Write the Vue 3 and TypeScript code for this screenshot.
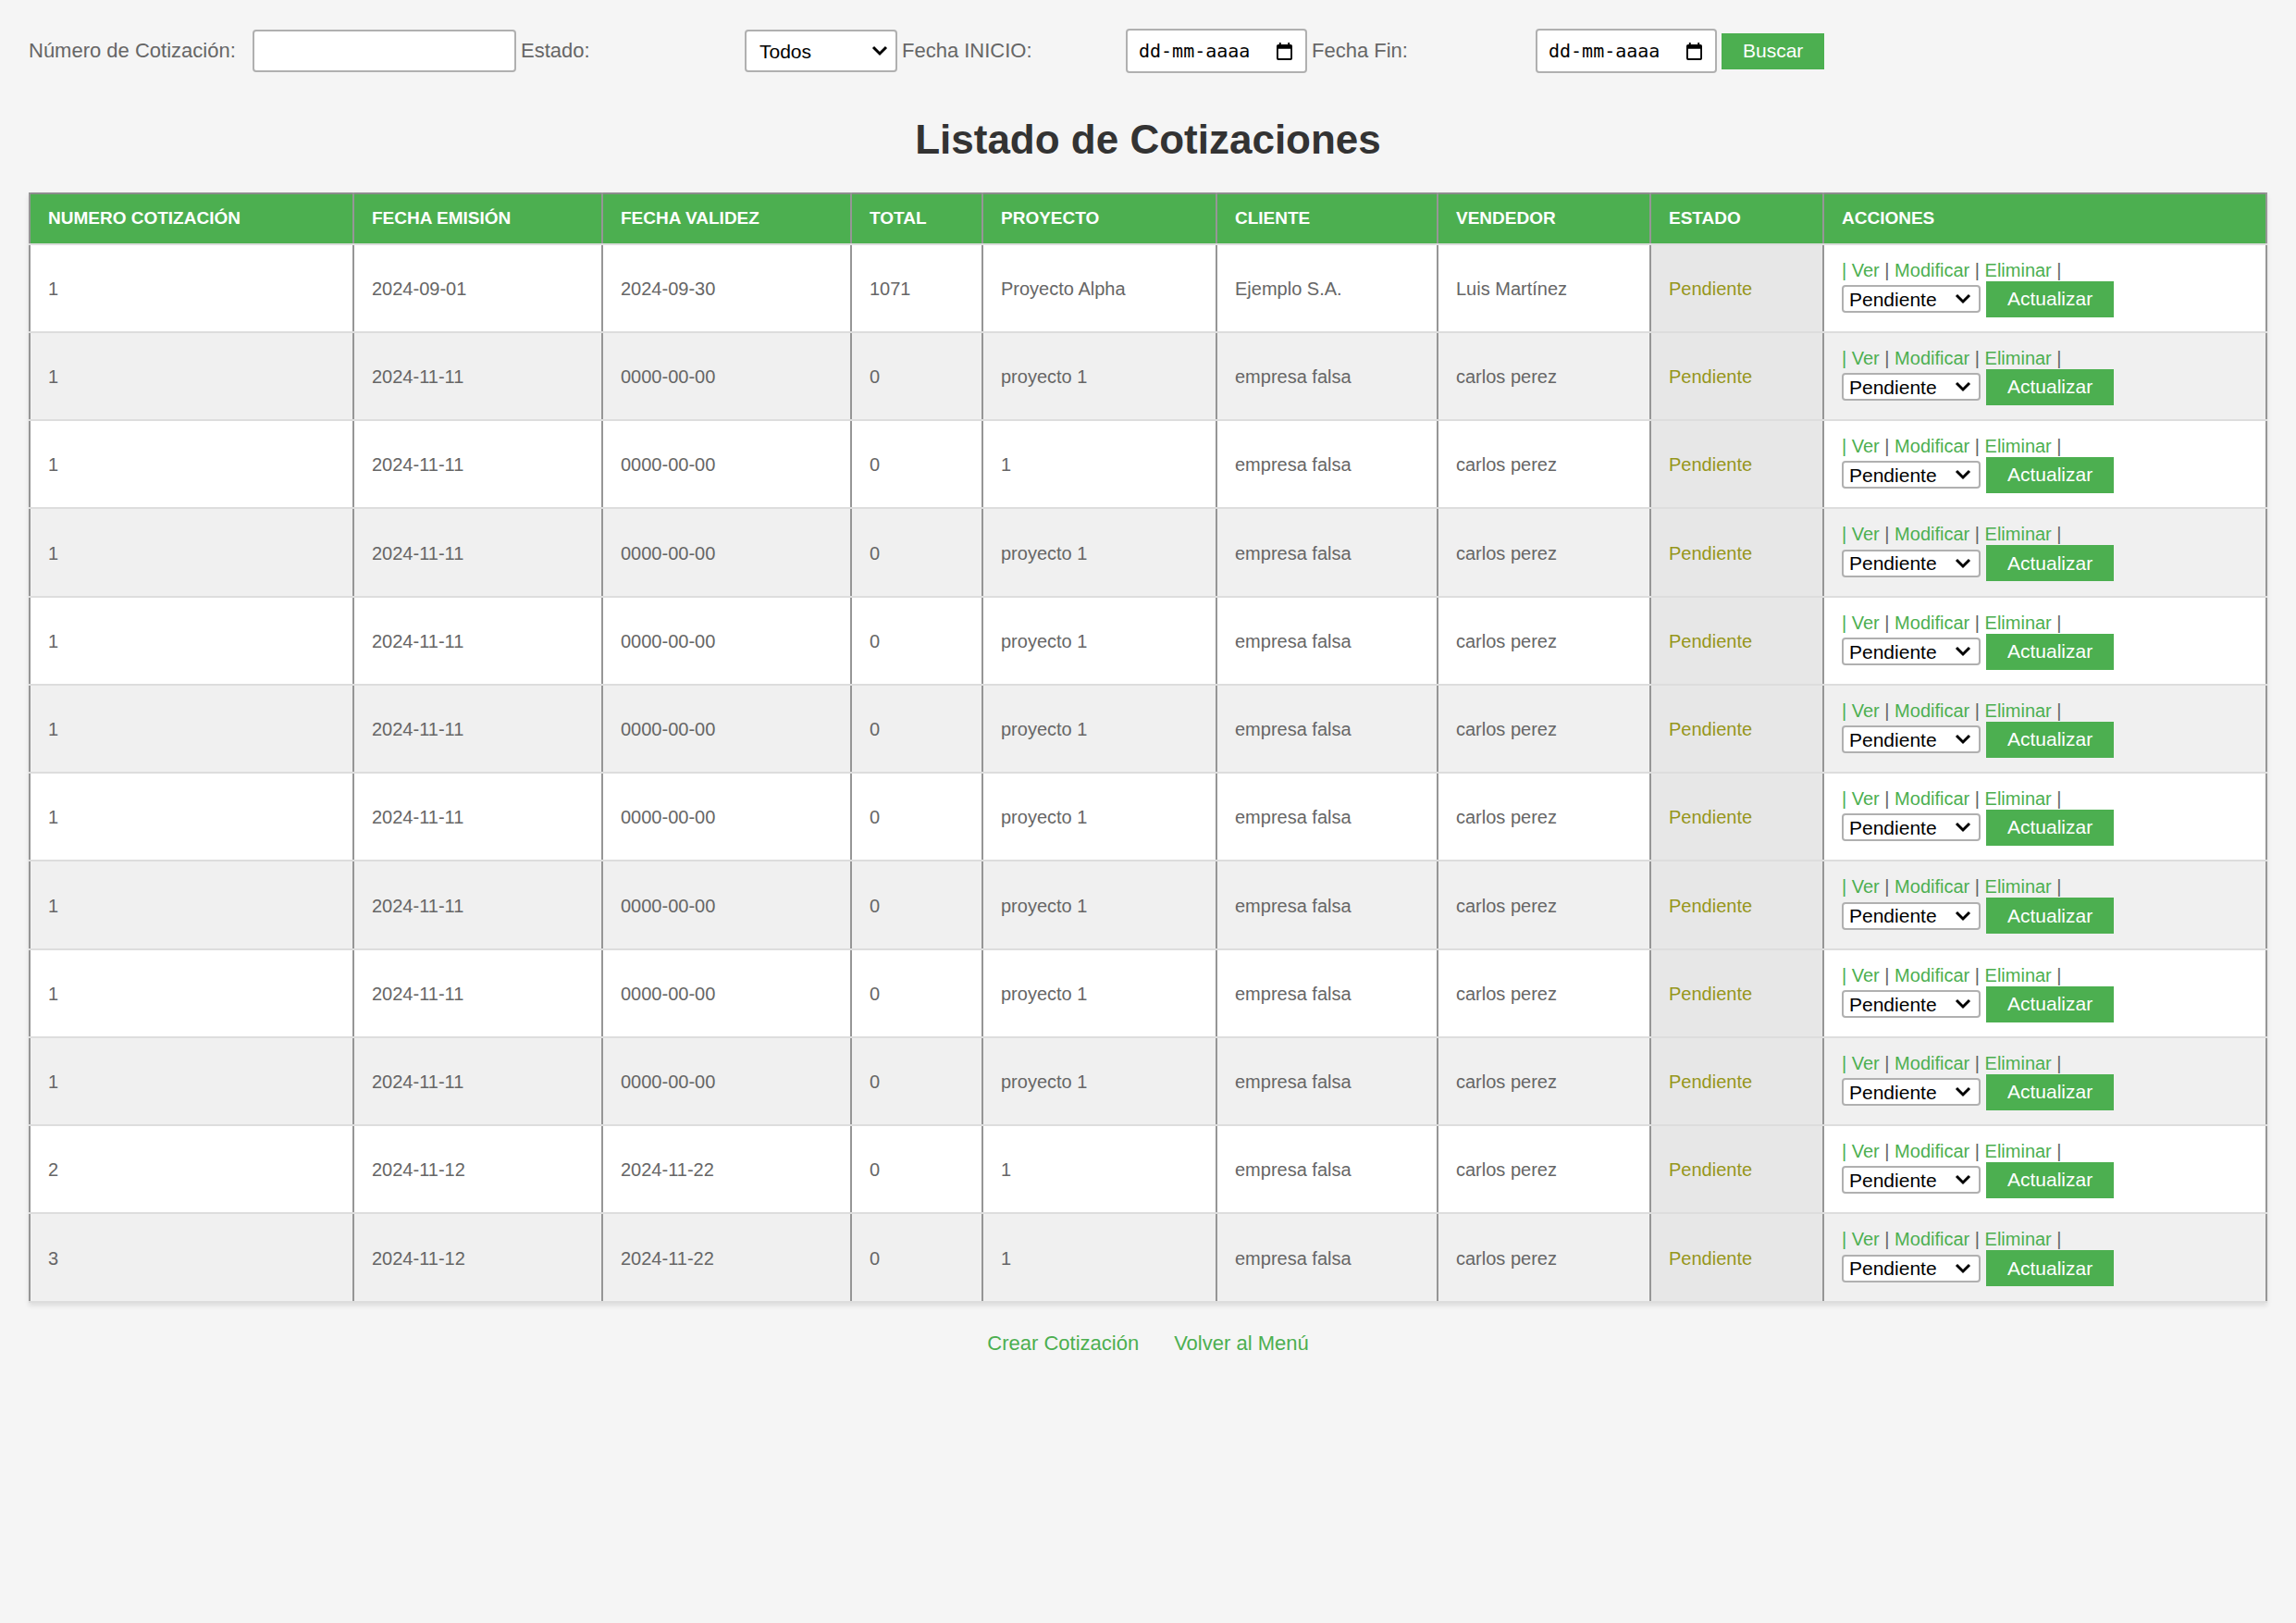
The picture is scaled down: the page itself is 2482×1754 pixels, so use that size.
<script setup lang="ts">
import { ref } from 'vue'

interface Cotizacion {
  numero: number
  emision: string
  validez: string
  total: number
  proyecto: string
  cliente: string
  vendedor: string
  estado: string
}

const columnas = [
  'Numero Cotización',
  'Fecha Emisión',
  'Fecha Validez',
  'Total',
  'Proyecto',
  'Cliente',
  'Vendedor',
  'Estado',
  'Acciones',
]

const estados = ['Pendiente', 'Aceptada', 'Rechazada']

function fila(
  numero: number,
  emision: string,
  validez: string,
  total: number,
  proyecto: string,
  cliente = 'empresa falsa',
  vendedor = 'carlos perez',
): Cotizacion {
  return { numero, emision, validez, total, proyecto, cliente, vendedor, estado: 'Pendiente' }
}

const cotizaciones = ref<Cotizacion[]>([
  fila(1, '2024-09-01', '2024-09-30', 1071, 'Proyecto Alpha', 'Ejemplo S.A.', 'Luis Martínez'),
  fila(1, '2024-11-11', '0000-00-00', 0, 'proyecto 1'),
  fila(1, '2024-11-11', '0000-00-00', 0, '1'),
  ...Array.from({ length: 7 }, () => fila(1, '2024-11-11', '0000-00-00', 0, 'proyecto 1')),
  fila(2, '2024-11-12', '2024-11-22', 0, '1'),
  fila(3, '2024-11-12', '2024-11-22', 0, '1'),
])

const seleccion = ref<string[]>(cotizaciones.value.map((c) => c.estado))

const numero = ref('')
const estado = ref('Todos')
const inicio = ref('')
const fin = ref('')

function actualizar(i: number) {
  cotizaciones.value[i].estado = seleccion.value[i]
}
</script>

<template>
  <main class="page">
    <form class="filters" @submit.prevent>
      <label for="numero">Número de Cotización:</label>
      <input id="numero" v-model="numero" class="field number" type="text" />

      <label for="estado">Estado:</label>
      <span class="select status">
        <select id="estado" v-model="estado" class="field">
          <option>Todos</option>
          <option v-for="e in estados" :key="e">{{ e }}</option>
        </select>
        <svg class="chevron" viewBox="0 0 18 12" aria-hidden="true"><path d="M2 2 L9 9 L16 2" /></svg>
      </span>

      <label for="inicio">Fecha INICIO:</label>
      <span class="date">
        <input id="inicio" v-model="inicio" class="field" type="text" placeholder="dd-mm-aaaa" />
        <svg class="calendar" viewBox="0 0 18 20" aria-hidden="true">
          <path fill-rule="evenodd" d="M3 0h2v2h8V0h2v2h1a2 2 0 0 1 2 2v14a2 2 0 0 1-2 2H2a2 2 0 0 1-2-2V4a2 2 0 0 1 2-2h1zM2 7v11h14V7z" />
        </svg>
      </span>

      <label for="fin">Fecha Fin:</label>
      <span class="date">
        <input id="fin" v-model="fin" class="field" type="text" placeholder="dd-mm-aaaa" />
        <svg class="calendar" viewBox="0 0 18 20" aria-hidden="true">
          <path fill-rule="evenodd" d="M3 0h2v2h8V0h2v2h1a2 2 0 0 1 2 2v14a2 2 0 0 1-2 2H2a2 2 0 0 1-2-2V4a2 2 0 0 1 2-2h1zM2 7v11h14V7z" />
        </svg>
      </span>

      <button class="btn" type="submit">Buscar</button>
    </form>

    <h1>Listado de Cotizaciones</h1>

    <table>
      <colgroup>
        <col class="c-num" />
        <col class="c-date" />
        <col class="c-date" />
        <col class="c-total" />
        <col class="c-project" />
        <col class="c-client" />
        <col class="c-seller" />
        <col class="c-status" />
        <col />
      </colgroup>
      <thead>
        <tr>
          <th v-for="c in columnas" :key="c" scope="col">{{ c }}</th>
        </tr>
      </thead>
      <tbody>
        <tr v-for="(c, i) in cotizaciones" :key="i">
          <td>{{ c.numero }}</td>
          <td>{{ c.emision }}</td>
          <td>{{ c.validez }}</td>
          <td>{{ c.total }}</td>
          <td>{{ c.proyecto }}</td>
          <td>{{ c.cliente }}</td>
          <td>{{ c.vendedor }}</td>
          <td class="state">{{ c.estado }}</td>
          <td class="actions">
            <div class="links">
              <a href="#ver">| Ver</a> | <a href="#modificar">Modificar</a> | <a href="#eliminar">Eliminar</a> |
            </div>
            <form class="update" @submit.prevent="actualizar(i)">
              <span class="select">
                <select v-model="seleccion[i]" class="field" aria-label="Estado de la cotización">
                  <option v-for="e in estados" :key="e">{{ e }}</option>
                </select>
                <svg class="chevron" viewBox="0 0 18 12" aria-hidden="true"><path d="M2 2 L9 9 L16 2" /></svg>
              </span>
              <button class="btn" type="submit">Actualizar</button>
            </form>
          </td>
        </tr>
      </tbody>
    </table>

    <nav class="footer">
      <a href="#crear">Crear Cotización</a>
      <a href="#menu">Volver al Menú</a>
    </nav>
  </main>
</template>

<style>
body {
  margin: 0;
  background: #f5f5f5;
}
</style>

<style scoped>
.page {
  padding: 31px;
  font-family: 'Liberation Sans', Arial, sans-serif;
  font-size: 22px;
  color: #666;
}

.filters {
  display: flex;
  align-items: center;
  gap: 5px;
}

.filters label {
  width: 237px;
}

.field {
  box-sizing: border-box;
  margin: 0;
  border: 2px solid #b0b0b0;
  border-radius: 4px;
  background: #fff;
  color: #000;
  font: 21px 'Liberation Sans', Arial, sans-serif;
}

.number {
  width: 285px;
  height: 46px;
}

.select,
.date {
  position: relative;
  display: flex;
}

.select .field {
  width: 150px;
  height: 30px;
  padding: 0 6px;
  appearance: none;
}

.status .field {
  width: 165px;
  height: 46px;
  padding: 0 14px;
}

.chevron {
  position: absolute;
  top: 50%;
  right: 10px;
  width: 18px;
  height: 12px;
  transform: translateY(-50%);
  fill: none;
  stroke: #000;
  stroke-width: 3;
  pointer-events: none;
}

.date .field {
  width: 196px;
  height: 48px;
  padding: 0 12px;
  font-family: 'DejaVu Sans Mono', monospace;
  font-size: 20px;
}

.date .field::placeholder {
  color: #000;
  opacity: 1;
}

.calendar {
  position: absolute;
  top: 15px;
  right: 16px;
  width: 17px;
  height: 19px;
  pointer-events: none;
}

.btn {
  height: 39px;
  padding: 0 23px;
  border: 0;
  background: #4caf50;
  color: #fff;
  font: 21px 'Liberation Sans', Arial, sans-serif;
}

h1 {
  margin: 46px 0 32px;
  text-align: center;
  font-size: 44px;
  line-height: 51px;
  color: #333;
}

table {
  width: 100%;
  table-layout: fixed;
  border-collapse: collapse;
  border-top: 2px solid #8c8c8c;
  background: #fff;
  box-shadow: 0 3px 5px rgba(0, 0, 0, 0.1);
  font-size: 20px;
}

.c-num { width: 350px; }
.c-date { width: 269px; }
.c-total { width: 142px; }
.c-project { width: 253px; }
.c-client { width: 239px; }
.c-seller { width: 230px; }
.c-status { width: 187px; }

th,
td {
  padding: 0 19px;
  border-right: 2px solid #969696;
  border-left: 2px solid #969696;
  border-bottom: 2px solid #ddd;
  text-align: left;
}

th {
  height: 51px;
  padding-bottom: 2px;
  background: #4caf50;
  color: #fff;
  font-size: 19px;
  text-transform: uppercase;
}

td {
  padding-top: 2px;
}

td.actions {
  padding-top: 0;
}

tbody tr {
  height: 95px;
}

tbody tr:nth-child(4n) {
  height: 96px;
}

tbody tr:nth-child(even) {
  background: #f0f0f0;
}

.state {
  background: #e7e7e7;
  color: #96961c;
}

.links {
  line-height: 23px;
}

.update {
  display: flex;
  align-items: center;
  gap: 6px;
}

a {
  color: #4caf50;
  text-decoration: none;
}

.footer {
  display: flex;
  justify-content: center;
  gap: 38px;
  margin-top: 31px;
  line-height: 25px;
}
</style>
